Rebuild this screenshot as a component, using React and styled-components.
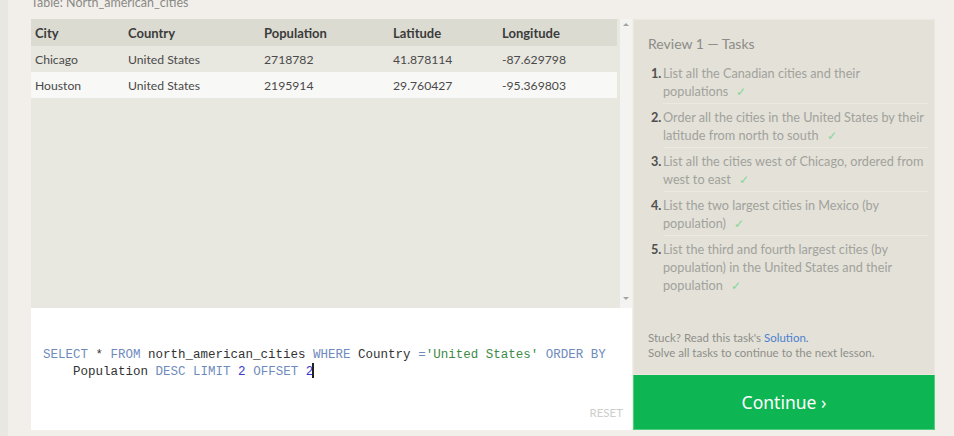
import React from "react";
import styled, { createGlobalStyle } from "styled-components";

const GlobalStyle = createGlobalStyle`
  html, body {
    margin: 0;
    padding: 0;
    background: #e9e7e2;
    overflow: hidden;
  }
  body {
    font-family: Lato, "Noto Sans", sans-serif;
  }
`;

const Page = styled.div`
  display: flex;
  margin-left: 8px;
  padding-left: 23px;
  height: 436px;
  background: #f2efea;
  overflow: hidden;
`;

const LeftColumn = styled.div`
  display: flex;
  flex-direction: column;
  width: 601px;
`;

const TableLabel = styled.div`
  margin-top: -4px;
  height: 23px;
  line-height: 14px;
  font-size: 12.5px;
  color: #8a8a86;
`;

const TablePanel = styled.div`
  display: flex;
  height: 289px;
  background: #e8e7e0;
`;

const TableArea = styled.div`
  flex: 1;
  padding-right: 3px;
`;

const Grid = styled.table`
  width: 100%;
  border-collapse: collapse;
  table-layout: fixed;
  font-size: 12.2px;
`;

const HeadCell = styled.th`
  box-sizing: border-box;
  width: ${(p) => p.$w || "auto"};
  height: 27px;
  padding: 0 4px;
  text-align: left;
  font-weight: 700;
  font-size: 13px;
  color: #3b3b3b;
  background: #dcdbd2;
`;

const Row = styled.tr`
  background: ${(p) => (p.$light ? "#f8f8f6" : "#e8e7e0")};
`;

const Cell = styled.td`
  height: 26px;
  padding: 0 4px;
  color: #4a4a4a;
`;

const Scrollbar = styled.div`
  display: flex;
  flex-direction: column;
  justify-content: space-between;
  align-items: center;
  width: 12px;
  padding: 4px 0 8px;
  background: #f3f3f1;
  box-sizing: border-box;
`;

const Arrow = styled.div`
  width: 0;
  height: 0;
  border-left: 3px solid transparent;
  border-right: 3px solid transparent;
  ${(p) =>
    p.$down
      ? "border-top: 3px solid #a3a3a0;"
      : "border-bottom: 3px solid #a3a3a0;"}
`;

const Editor = styled.div`
  position: relative;
  height: 122px;
  background: #ffffff;
  padding: 39px 12px 0;
  box-sizing: border-box;
  font-family: "Liberation Mono", monospace;
  font-size: 12.5px;
  line-height: 16px;
  color: #333;
  white-space: pre;
`;

const Kw = styled.span`
  color: ${(p) => p.$c || "#6f8bbd"};
`;

const Caret = styled.span`
  display: inline-block;
  width: 2px;
  height: 15px;
  margin-left: -1px;
  vertical-align: -3px;
  background: #222;
`;

const ResetButton = styled.div`
  position: absolute;
  right: 9px;
  bottom: 9px;
  font-family: Lato, sans-serif;
  font-size: 11.5px;
  color: #cdcdcb;
`;

const RightColumn = styled.div`
  display: flex;
  flex-direction: column;
  width: 302px;
  margin-top: 19px;
  margin-left: 1px;
`;

const TasksPanel = styled.div`
  display: flex;
  flex-direction: column;
  height: 356px;
  box-sizing: border-box;
  padding: 14px 6px 14px 14px;
  background: #e3e1d8;
  border: 1px solid #eae8e0;
`;

const Title = styled.div`
  font-size: 14px;
  line-height: 20px;
  color: #8c8c88;
  margin-bottom: 10px;
`;

const TaskList = styled.ol`
  list-style: none;
  margin: 0;
  padding: 0 0 0 3px;
  flex: 1;
`;

const Task = styled.li`
  display: flex;
  margin-bottom: 4px;
  font-size: 12.7px;
  line-height: 18px;
`;

const Num = styled.span`
  width: 12px;
  flex: none;
  font-weight: 700;
  color: #4f4f4f;
`;

const TaskText = styled.div`
  flex: 1;
  color: #a2a29c;
  padding-bottom: 3px;
  border-bottom: ${(p) => (p.$last ? "none" : "1px solid #ebe9e2")};
`;

const Check = styled.span`
  display: inline-block;
  line-height: 0;
  color: #86d69a;
  font-size: 12px;
  margin-left: 8px;
`;

const Hint = styled.div`
  font-size: 11.5px;
  line-height: 15px;
  color: #8f8f8a;
`;

const Link = styled.span`
  color: #4d7fd0;
`;

const ContinueButton = styled.div`
  display: flex;
  align-items: center;
  justify-content: center;
  height: 55px;
  background: #0db652;
  border: 1px solid #4fd07f;
  border-top: none;
  box-sizing: border-box;
  font-family: "Noto Sans", sans-serif;
  font-size: 17.5px;
  color: #ffffff;
`;

const columns = [
  ["City", "93px"],
  ["Country", "136px"],
  ["Population", "129px"],
  ["Latitude", "109px"],
  ["Longitude", "auto"],
];

const rows = [
  ["Chicago", "United States", "2718782", "41.878114", "-87.629798"],
  ["Houston", "United States", "2195914", "29.760427", "-95.369803"],
];

const tasks = [
  "List all the Canadian cities and their populations",
  "Order all the cities in the United States by their latitude from north to south",
  "List all the cities west of Chicago, ordered from west to east",
  "List the two largest cities in Mexico (by population)",
  "List the third and fourth largest cities (by population) in the United States and their population",
];

export default function App() {
  return (
    <>
      <GlobalStyle />
      <Page>
        <LeftColumn>
          <TableLabel>Table: North_american_cities</TableLabel>
          <TablePanel>
            <TableArea>
              <Grid>
                <thead>
                  <tr>
                    {columns.map(([name, w]) => (
                      <HeadCell key={name} $w={w}>
                        {name}
                      </HeadCell>
                    ))}
                  </tr>
                </thead>
                <tbody>
                  {rows.map((r, i) => (
                    <Row key={r[0]} $light={i === 1}>
                      {r.map((v, j) => (
                        <Cell key={j}>{v}</Cell>
                      ))}
                    </Row>
                  ))}
                </tbody>
              </Grid>
            </TableArea>
            <Scrollbar>
              <Arrow />
              <Arrow $down />
            </Scrollbar>
          </TablePanel>
          <Editor>
            <Kw>SELECT</Kw> * <Kw>FROM</Kw> north_american_cities <Kw>WHERE</Kw>{" "}
            Country <Kw>=</Kw>
            <Kw $c="#3d8a46">'United States'</Kw> <Kw>ORDER BY</Kw>
            {"\n    "}Population <Kw>DESC</Kw> <Kw>LIMIT</Kw> <Kw $c="#3a3acb">2</Kw>{" "}
            <Kw>OFFSET</Kw> <Kw $c="#3a3acb">2</Kw>
            <Caret />
            <ResetButton>RESET</ResetButton>
          </Editor>
        </LeftColumn>
        <RightColumn>
          <TasksPanel>
            <Title>Review 1 — Tasks</Title>
            <TaskList>
              {tasks.map((t, i) => (
                <Task key={i}>
                  <Num>{i + 1}.</Num>
                  <TaskText $last={i === tasks.length - 1}>
                    {t}
                    <Check>✓</Check>
                  </TaskText>
                </Task>
              ))}
            </TaskList>
            <Hint>
              Stuck? Read this task's <Link>Solution.</Link>
            </Hint>
            <Hint>Solve all tasks to continue to the next lesson.</Hint>
          </TasksPanel>
          <ContinueButton>Continue ›</ContinueButton>
        </RightColumn>
      </Page>
    </>
  );
}
